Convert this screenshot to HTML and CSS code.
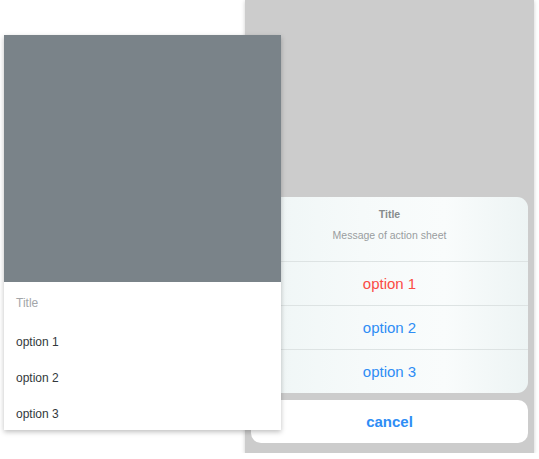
FILE: index.html
```html
<!DOCTYPE html>
<html>
<head>
<meta charset="utf-8">
<link rel="stylesheet" href="styles.css">
</head>
<body>
<div class="stage">
  <div class="android">
    <div class="android-backdrop"></div>
    <div class="android-sheet">
      <div class="a-title">Title</div>
      <div class="a-option">option 1</div>
      <div class="a-option">option 2</div>
      <div class="a-option">option 3</div>
    </div>
  </div>
  <div class="ios">
    <div class="ios-group">
      <div class="ios-header">
        <div class="ios-title">Title</div>
        <div class="ios-message">Message of action sheet</div>
      </div>
      <div class="ios-option danger">option 1</div>
      <div class="ios-option">option 2</div>
      <div class="ios-option">option 3</div>
    </div>
    <div class="ios-cancel">cancel</div>
  </div>
</div>
</body>
</html>
```

FILE: styles.css
```css
html, body {
  margin: 0;
  padding: 0;
  background: #ffffff;
  font-family: "Liberation Sans", Arial, sans-serif;
}

.stage {
  display: flex;
  align-items: flex-start;
  padding-left: 4px;
}

.android {
  position: relative;
  z-index: 2;
  width: 277px;
  height: 395px;
  margin-top: 35px;
  display: flex;
  flex-direction: column;
  background: #ffffff;
  overflow: hidden;
  box-shadow: 0 2px 5px rgba(0, 0, 0, 0.25);
}

.android-backdrop {
  height: 247px;
  flex-shrink: 0;
  background: #7a8389;
}

.android-sheet {
  flex: 1;
  display: flex;
  flex-direction: column;
  background: #ffffff;
}

.a-title {
  height: 42px;
  flex-shrink: 0;
  display: flex;
  align-items: center;
  padding-left: 12px;
  font-size: 12px;
  color: #a3a6a9;
}

.a-option {
  height: 36px;
  flex-shrink: 0;
  display: flex;
  align-items: center;
  padding-left: 12px;
  font-size: 12px;
  color: #33383c;
}

.ios {
  position: relative;
  z-index: 1;
  width: 289px;
  height: 453px;
  margin-left: -36px;
  box-sizing: border-box;
  background: #cccccc;
  display: flex;
  flex-direction: column;
  justify-content: flex-end;
  gap: 7px;
  padding: 0 6px 10px 6px;
  box-shadow: 0 1px 4px rgba(0, 0, 0, 0.2);
}

.ios-group {
  border-radius: 11px;
  overflow: hidden;
  background: linear-gradient(90deg, #eef5f5 0%, #f6fafa 40%, #f9fcfc 70%, #edf4f4 100%);
}

.ios-header {
  height: 64px;
  display: flex;
  flex-direction: column;
  align-items: center;
  padding-top: 11px;
  box-sizing: border-box;
  gap: 8px;
}

.ios-title {
  font-size: 10.5px;
  font-weight: bold;
  color: #878c8d;
  line-height: 13px;
}

.ios-message {
  font-size: 10.5px;
  color: #999d9f;
  line-height: 13px;
}

.ios-option {
  height: 44px;
  display: flex;
  align-items: center;
  justify-content: center;
  border-top: 1px solid #dde3e3;
  box-sizing: border-box;
  font-size: 15px;
  color: #2e8df5;
}

.ios-option.danger {
  color: #fb4c45;
}

.ios-cancel {
  height: 43px;
  border-radius: 10px;
  background: #ffffff;
  display: flex;
  align-items: center;
  justify-content: center;
  font-size: 15px;
  font-weight: bold;
  color: #2e8df5;
}
```
